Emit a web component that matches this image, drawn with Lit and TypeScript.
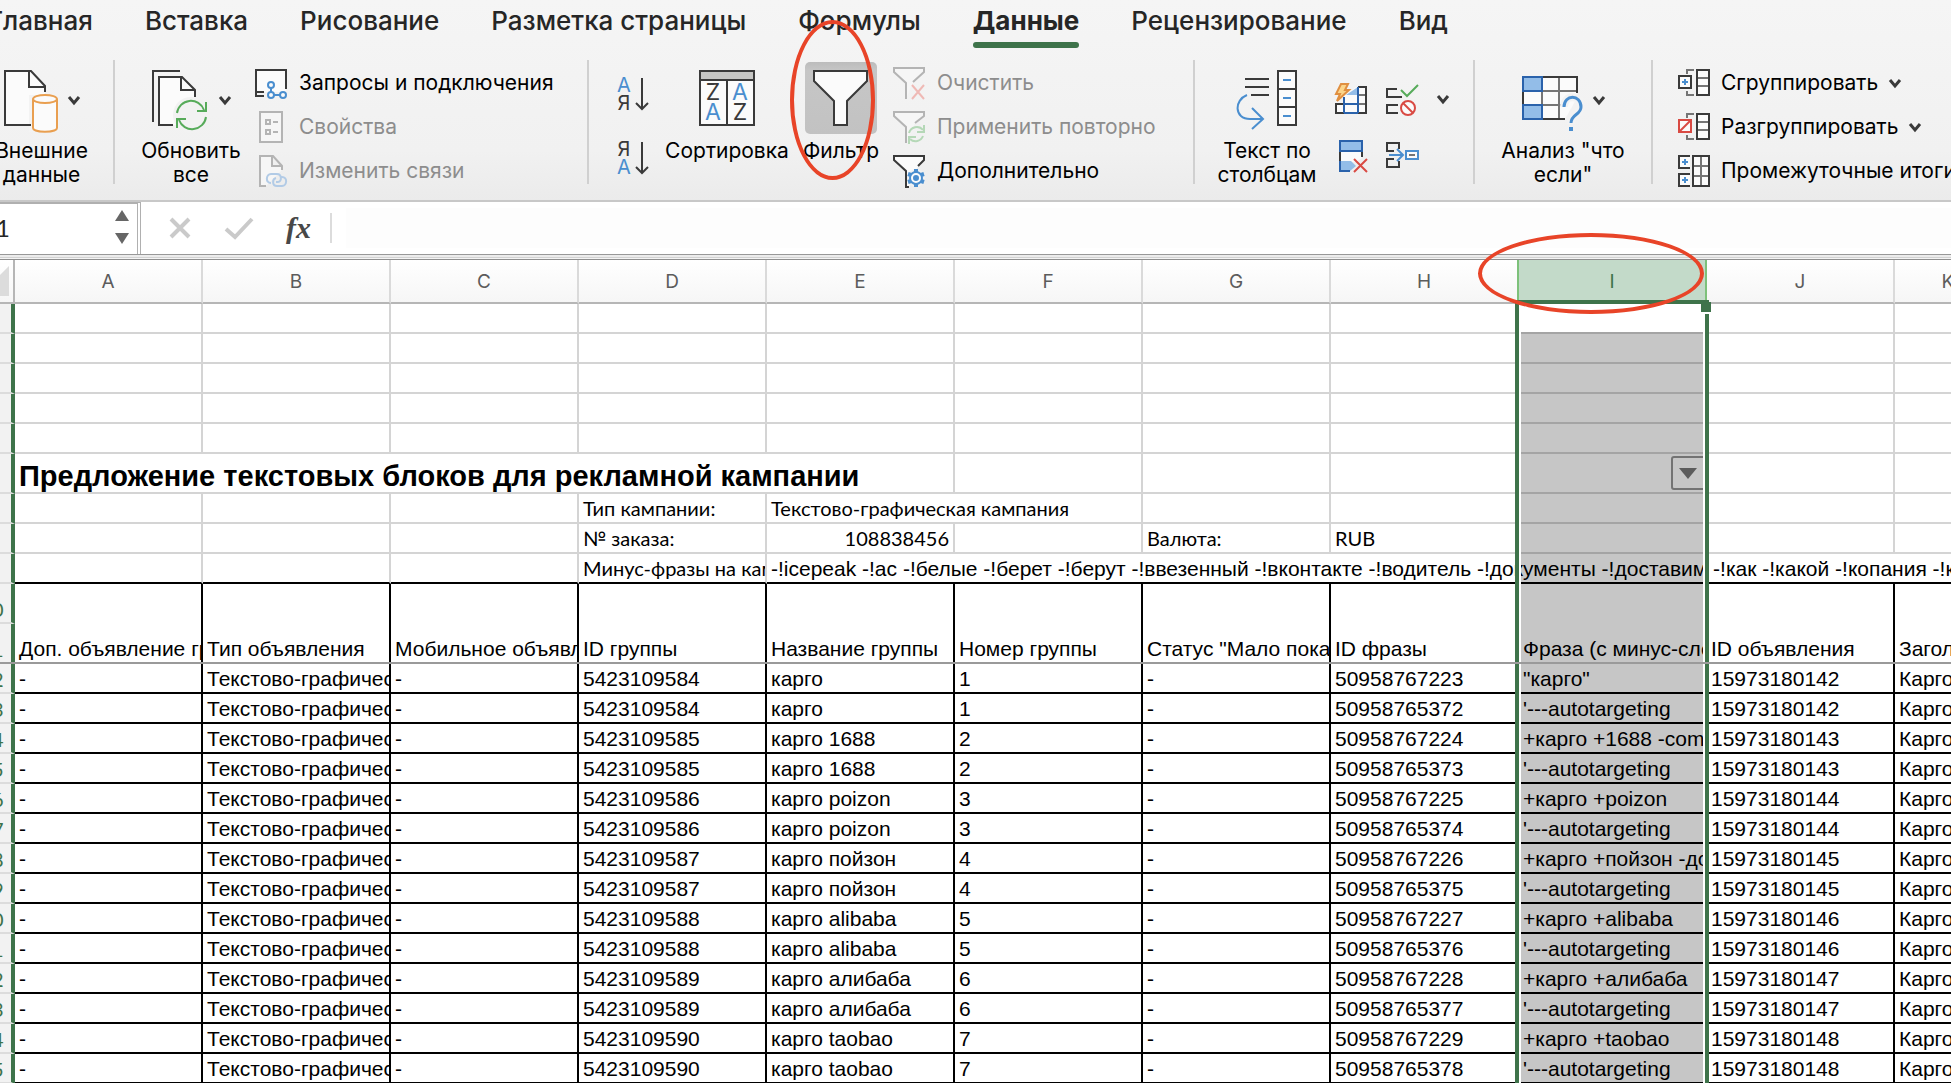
import { LitElement, html, svg, css, nothing } from "lit";
import type { TemplateResult } from "lit";
import { customElement } from "lit/decorators.js";
import { classMap } from "lit/directives/class-map.js";

const pic = (w: number, h: number, body: unknown) =>
  html`<svg class="pic" width=${w} height=${h} viewBox="0 0 ${w} ${h}" fill="none" stroke-width="2" aria-hidden="true">${body}</svg>`;

const INK = "#3a3a3a";
const BLUE = "#4a8ecf";
const NAVY = "#2a62ab";
const SKY = "#93bde8";
const RED = "#d94a43";
const GREEN = "#57ab5a";
const GREY = "#757575";
const PALE = "#b4b4b4";
const PAPER = "#fbfbfb";

const chevron = pic(14, 10, svg`<path d="M2 2L7 8L12 2" stroke=${INK} stroke-width="3"/>`);

const icons = {
  external: pic(56, 64, svg`
    <path d="M28 57H2V3H28L42 18V57Z" fill=${PAPER}/>
    <rect x="26" y="27" width="30" height="37" fill="#f3f3f3"/>
    <path d="M28 57H2V3H28L42 18V24M26 3V19H42" stroke=${INK}/>
    <path d="M30 31V60C30 65 54 65 54 60V31" fill=${PAPER} stroke="#e99f50"/>
    <ellipse cx="42" cy="31" rx="12" ry="4" fill=${PAPER} stroke="#e99f50"/>`),
  refresh: pic(60, 64, svg`
    <path d="M30 3H3V54" stroke=${INK}/>
    <path d="M23 57H9V9H31L45 23V57Z" fill=${PAPER}/>
    <circle cx="41" cy="47" r="18" fill="#f2f2f2"/>
    <path d="M23 57H9V9H32L45 22V29M31 9V22H45" stroke=${INK}/>
    <path d="M27 45A14 14 0 0 1 54 42M56 34V43H47M56 49A14 14 0 0 1 29 52M27 60V51H36" stroke=${GREEN}/>`),
  queries: pic(36, 36, svg`
    <rect x="3" y="5" width="30" height="22" fill=${PAPER}/>
    <path d="M11 31H3V5H33V24M3 27H11" stroke=${INK}/>
    <path d="M18 23V27M21 30H27" stroke=${BLUE}/>
    <g stroke=${BLUE} fill=${PAPER}><circle cx="18" cy="20" r="3"/><circle cx="18" cy="30" r="3"/><circle cx="30" cy="30" r="3"/></g>`),
  properties: pic(36, 36, svg`
    <g stroke=${PALE}><rect x="7" y="3" width="22" height="30" fill="#f6f6f6"/>
    <rect x="13" y="11" width="4" height="4"/><rect x="13" y="21" width="4" height="4"/><path d="M20 13H25M20 23H25"/></g>`),
  links: pic(36, 36, svg`
    <path d="M13 33H7V3H20L29 13V17M19 3V13H29" stroke=${PALE} fill="#f6f6f6"/>
    <path d="M18 30C12 30 13 21 18 21H24C29 21 29 29 25 29H23M27 24H29C35 24 34 33 29 33H24C19 33 19 26 23 25" stroke="#b2cbe6"/>`),
  sortUp: pic(36, 36, svg`
    <text x="9" y="16" class="glyph" fill=${BLUE}>А</text><text x="9" y="34" class="glyph" fill=${INK}>Я</text>
    <path d="M27 2V33M21 27L27 33L33 27" stroke=${INK}/>`),
  sortDown: pic(36, 36, svg`
    <text x="9" y="16" class="glyph" fill=${INK}>Я</text><text x="9" y="34" class="glyph" fill=${BLUE}>А</text>
    <path d="M27 2V33M21 27L27 33L33 27" stroke=${INK}/>`),
  sort: pic(58, 64, svg`
    <rect x="2" y="3" width="54" height="54" fill=${PAPER} stroke=${INK}/>
    <path d="M3 4H55V11H3Z" fill="#c6c6c4"/><path d="M2 12H56M29 12V57" stroke=${INK}/>
    <text x="15" y="32" class="big" fill=${INK}>Z</text><text x="42" y="32" class="big" fill=${BLUE}>A</text>
    <text x="15" y="52" class="big" fill=${BLUE}>A</text><text x="42" y="52" class="big" fill=${INK}>Z</text>`),
  filter: pic(72, 72, svg`
    <path d="M9 9H62V19L42 39V63H29V39L9 19Z" fill=${PAPER} stroke=${INK}/>`),
  clear: pic(36, 36, svg`
    <path d="M22 17L33 7V3H3V7L15 18V34" fill="#f6f6f6" stroke=${PALE}/>
    <path d="M21 20L33 34M33 20L21 34" stroke="#efb9b5"/>`),
  reapply: pic(36, 36, svg`
    <path d="M24 14L33 7V3H3V7L15 18V34" fill="#f6f6f6" stroke=${PALE}/>
    <path d="M18 24A8 8 0 0 1 32 21M33 16V23H26M32 27A8 8 0 0 1 19 30M18 35V28H25" stroke="#b5d8b7"/>`),
  advanced: pic(36, 36, svg`
    <path d="M27 13L33 7V3H3V7L15 18V34H18" fill=${PAPER} stroke=${INK}/>
    <circle cx="25" cy="25" r="9" fill="#f2f2f2"/>
    <circle cx="25" cy="25" r="6" fill=${PAPER} stroke=${BLUE} stroke-width="2"/>
    <circle cx="25" cy="25" r="2" fill=${BLUE} stroke=${BLUE}/>
    <path d="M25 16V19M25 31V34M17 21L20 22M30 28L33 29M33 21L30 22M20 28L17 29" stroke=${BLUE} stroke-width="4"/>`),
  columns: pic(64, 64, svg`
    <rect x="43" y="3" width="18" height="54" fill=${PAPER}/>
    <path d="M10 11H34M10 19H34M16 27H34M43 3H61V57H43ZM43 21H61M43 39H61" stroke=${INK}/>
    <path d="M48 12H56M48 30H56M48 48H56M12 27C-1 32 -1 51 15 51H27M17 40L28 51L17 61" stroke=${BLUE}/>`),
  flash: pic(34, 34, svg`
    <path d="M22 5H32V31H2V22H10V14Z" fill=${PAPER}/>
    <path d="M24 5V13H12Z" fill=${SKY}/>
    <path d="M25 13H32M25 22H32" stroke=${GREY}/>
    <path d="M24 5H32V31H2V22H9" stroke=${INK}/>
    <path d="M10 15V31M24 5V31M10 22H24M10 31H24" stroke=${NAVY}/>
    <path d="M7 2H14L11 8H15L3 19L6 12H2Z" fill="#fbd58a" stroke="#e08f40"/>`),
  validate: pic(36, 34, svg`
    <path d="M13 7H3V15H18M14 23H3V31H14" stroke=${INK}/>
    <path d="M17 8L23 14L34 3" stroke=${GREEN}/>
    <g stroke=${RED}><circle cx="24" cy="26" r="7" fill=${PAPER}/><path d="M19 21L29 31"/></g>`),
  dedupe: pic(34, 36, svg`
    <path d="M6 12H28V20L22 24H6Z" fill=${PAPER}/>
    <path d="M6 23H17L22 28L16 33H6Z" fill=${SKY}/>
    <path d="M28 13V19M6 13V23" stroke=${INK}/>
    <path d="M6 3H28V13H6Z" fill=${SKY} stroke=${NAVY}/><path d="M6 23V33H16" stroke=${NAVY}/>
    <path d="M20 21L33 34M33 21L20 34" stroke=${RED}/>`),
  merge: pic(36, 36, svg`
    <path d="M10 13H3V5H15V11M10 21H3V29H15V23" stroke=${INK}/>
    <path d="M5 17H18M13 11L19 17L13 23" stroke=${BLUE}/>
    <rect x="22" y="13" width="12" height="8" fill=${PAPER} stroke=${BLUE}/><path d="M25 17H31" stroke=${GREY}/>`),
  whatIf: pic(64, 64, svg`
    <path d="M3 9H57V30L45 51H3Z" fill=${PAPER}/>
    <path d="M22 9V51M39 9V51M3 23H57M3 37H44" stroke=${GREY}/>
    <path d="M45 51H3V9H57V25" stroke=${INK}/>
    <path d="M3 9H22V23H3ZM3 37H22V51H3Z" fill=${SKY} stroke=${NAVY}/>
    <path d="M44 39C44 26 61 26 61 39C61 47 51 46 51 56" stroke="#f3f3f3" stroke-width="8"/>
    <path d="M44 39C44 26 61 26 61 39C61 47 51 46 51 55" stroke=${BLUE} stroke-width="3"/>
    <rect x="49" y="59" width="4" height="4" fill=${BLUE}/>`),
  group: pic(34, 36, svg`
    <path d="M17 5H10V9M10 26V30H17" stroke=${GREY}/>
    <rect x="2" y="11" width="12" height="12" fill=${PAPER} stroke=${INK}/><path d="M5 17H11M8 14V20" stroke=${BLUE}/>
    <path d="M20 5H32V30H20Z" fill=${PAPER}/><path d="M20 13H32M20 21H32" stroke=${GREY}/><path d="M20 5H32V30H20Z" stroke=${INK}/>`),
  ungroup: pic(34, 36, svg`
    <path d="M17 5H10V9M10 26V30H17" stroke=${GREY}/>
    <rect x="2" y="11" width="12" height="12" fill=${PAPER} stroke=${RED}/><path d="M3 22L13 12" stroke=${RED}/>
    <path d="M20 5H32V30H20Z" fill=${PAPER}/><path d="M20 13H32M20 21H32" stroke=${GREY}/><path d="M20 5H32V30H20Z" stroke=${INK}/>`),
  subtotal: pic(34, 36, svg`
    <path d="M13 3H2V15H13M13 21H2V33H13" fill=${PAPER} stroke=${INK}/>
    <path d="M5 9H11M8 6V12M5 27H11M8 24V30" stroke=${BLUE}/>
    <path d="M16 3H32V33H16Z" fill=${PAPER}/><path d="M24 3V33M16 13H32M16 23H32" stroke=${GREY}/><path d="M16 3H32V33H16Z" stroke=${INK}/>`),
};

const TABS = ["Главная", "Вставка", "Рисование", "Разметка страницы", "Формулы", "Данные", "Рецензирование", "Вид"];
const COLUMNS = ["A", "B", "C", "D", "E", "F", "G", "H", "I", "J", "K"];
const HEADINGS = [
  "Доп. объявление группы", "Тип объявления", "Мобильное объявление", "ID группы", "Название группы",
  "Номер группы", "Статус \"Мало показов\"", "ID фразы", "Фраза (с минус-словами)", "ID объявления", "Заголовок",
];
const GROUPS: [string, string][] = [
  ["карго", "\"карго\""],
  ["карго 1688", "+карго +1688 -com"],
  ["карго poizon", "+карго +poizon"],
  ["карго пойзон", "+карго +пойзон -доставка"],
  ["карго alibaba", "+карго +alibaba"],
  ["карго алибаба", "+карго +алибаба"],
  ["карго taobao", "+карго +taobao"],
];
const ROWS: string[][] = GROUPS.flatMap(([name, phrase], i) => {
  const row = (phraseId: number, text: string) => [
    "-", "Текстово-графическое", "-", String(5423109584 + i), name, String(i + 1), "-",
    String(phraseId), text, String(15973180142 + i), "Карго",
  ];
  return [row(50958767223 + i, phrase), row(50958765372 + i, "'---autotargeting")];
});
const MINUS =
  "-!icepeak -!ас -!белые -!берет -!берут -!ввезенный -!вконтакте -!водитель -!документы -!доставим -!как -!какой -!копания -!ксерокс";

@customElement("app-root")
export class AppRoot extends LitElement {
  static styles = css`
    :host {
      display: flex;
      flex-direction: column;
      height: 100vh;
      overflow: hidden;
      position: relative;
      background: #fff;
      color: #000;
      font-family: Inter, "Liberation Sans", sans-serif;
      font-size: 21px;
      line-height: 24px;
      --accent: #3e734a;
    }
    * { box-sizing: border-box; }
    button, input {
      font: inherit;
      color: inherit;
      border: 0;
      margin: 0;
      padding: 0;
      background: none;
      white-space: nowrap;
    }
    svg { display: block; flex: none; overflow: visible; }

    .ribbon {
      flex: none;
      height: 202px;
      overflow: hidden;
      border-bottom: 2px solid #c8c8c8;
      background: linear-gradient(#f5f5f5, #f1f1f1 75%, #ebebeb);
    }
    .tabs { display: flex; gap: 52px; height: 60px; margin-left: -12px; }
    .tab {
      display: flex;
      flex: none;
      flex-direction: column;
      height: 48px;
      color: #262626;
      font-size: 26px;
      line-height: 42px;
      font-weight: 500;
    }
    .tab.active { font-weight: 700; }
    .tab.active::after { content: ""; height: 6px; border-radius: 3px; background: var(--accent); }

    .groups { display: flex; height: 124px; }
    .group {
      display: flex;
      flex: none;
      gap: 12px;
      padding-left: 26px;
      border-right: 2px solid #d0d0d0;
    }
    .g-data { width: 115px; padding: 0 30px 0 0; justify-content: center; }
    .g-links { width: 474px; }
    .g-sort { width: 606px; }
    .g-tools { width: 280px; padding-left: 22px; gap: 17px; }
    .g-what { width: 178px; padding: 0; justify-content: center; }
    .g-outline { flex: 1; padding-left: 24px; border: 0; }

    .large {
      display: flex;
      flex-direction: column;
      align-items: center;
      gap: 7px;
      padding-top: 8px;
      text-align: center;
      flex: none;
      align-self: flex-start;
    }
    .large .art { display: flex; align-items: center; gap: 8px; height: 64px; }
    .large.w100 { width: 100px; }
    .large.w128 { width: 128px; }
    .large.w76 { width: 76px; }
    .large.on .pic { margin-top: -4px; border-radius: 5px; background: linear-gradient(#bcbcbc, #c6c6c6 12%, #c2c2c2); }
    .list { display: flex; flex-direction: column; align-items: flex-start; padding-top: 1px; }
    .small { display: flex; flex: none; align-items: center; gap: 10px; height: 44px; }
    .small:disabled { color: #8d8d8d; }
    .pair { display: flex; flex-direction: column; gap: 28px; padding-top: 16px; }
    .tools { display: grid; grid-template-columns: 34px 36px 14px; column-gap: 16px; row-gap: 22px; padding-top: 22px; align-content: start; align-items: center; }
    .glyph { font: 20px Inter, sans-serif; text-anchor: middle; }
    .big { font: 23px Inter, sans-serif; text-anchor: middle; }

    .formula { display: flex; flex: none; height: 52px; align-items: center; }
    .name {
      display: flex;
      align-items: center;
      justify-content: space-between;
      width: 141px;
      height: 52px;
      padding: 0 8px 4px 0;
      border-top: 2px solid #b0b0b0;
      border-right: 4px double #b0b0b0;
    }
    .name input { width: 80px; margin-left: -4px; font-family: Lato, sans-serif; font-size: 24px; color: #262626; }
    .steps { display: flex; flex-direction: column; gap: 12px; }
    .marks { display: flex; align-items: center; gap: 32px; padding-left: 27px; width: 191px; height: 30px; border-right: 2px solid #dcdcdc; }
    .fx { font: italic bold 30px/30px "Liberation Serif", serif; color: #484848; }
    .entry { flex: 1; height: 40px; margin-left: 14px; background: #fdfdfd; }
    .split {
      flex: none;
      height: 6px;
      background: linear-gradient(#989898 1px, #ececec 1px 3px, #d2d2d2 3px 4px, #f4f4f4 4px 5px, #8f8f8f 5px);
    }

    .sheet { position: relative; flex: 1; min-height: 0; overflow: hidden; background: #fff; }
    table { table-layout: fixed; width: 2030px; margin-left: -27px; border-collapse: separate; border-spacing: 0; }
    .c-num { width: 42px; }
    .c-col { width: 188px; }
    .c-last { width: 108px; }
    th, td {
      height: 30px;
      padding: 0 4px;
      overflow: hidden;
      white-space: nowrap;
      text-align: left;
      vertical-align: bottom;
      font-weight: 400;
      font-family: "Liberation Sans", Arial, sans-serif;
      font-size: 21px;
      line-height: 26px;
      border-right: 2px solid #d4d4d4;
      border-bottom: 2px solid #d4d4d4;
    }
    thead th {
      height: 44px;
      padding: 2px 4px 0;
      vertical-align: middle;
      text-align: center;
      font-family: Inter, sans-serif;
      font-size: 19px;
      color: #5c5c5c;
      background: linear-gradient(#fff, #f6f6f6);
      border-right: 2px solid #dadada;
      border-bottom: 2px solid #b6b6b6;
    }
    thead .corner { padding: 0; border-right-color: #b6b6b6; }
    .corner svg { margin-left: 6px; }
    thead .before { border-right-color: #7dc17a; }
    thead .picked { color: var(--accent); background: #c3dac9; border-right-color: #7dc17a; }
    tbody .num {
      text-align: center;
      padding: 0;
      font-family: Lato, sans-serif;
      font-size: 20px;
      color: var(--accent);
      background: #f2f2f2;
      border-right: 4px solid var(--accent);
      border-bottom-color: #dcdcdc;
    }
    .title td { height: 40px; line-height: 32px; font-size: 29px; font-weight: 700; }
    .meta td { font-family: Lato, sans-serif; font-size: 20px; line-height: 28px; }
    .meta .arial { font-family: "Liberation Sans", Arial, sans-serif; font-size: 21px; line-height: 26px; }
    .right { text-align: right; }
    .last td { border-bottom-color: #000; }
    .tall td, .tall th { height: 40px; }
    .boxed td { border-right-color: #000; border-bottom-color: #000; }
    .boxed.open td { border-bottom: 0; }
    .boxed.frozen td { border-bottom-color: #9a9a9a; }
    td.host { position: relative; }
    .drop {
      position: absolute;
      top: 2px;
      right: -2px;
      width: 36px;
      height: 34px;
      display: flex;
      align-items: center;
      padding-left: 6px;
      border: 2px solid #949494;
      border-radius: 3px;
    }

    .selection {
      position: absolute;
      top: 40px;
      bottom: 0;
      left: 1515px;
      width: 194px;
      pointer-events: none;
      border: 4px solid var(--accent);
      border-bottom: 0;
      box-shadow: inset 2px 0 #fff, inset -2px 0 #fff;
    }
    .shade { position: absolute; inset: 28px 2px 0; background: rgba(0, 0, 0, 0.225); }
    .handle { position: absolute; top: -2px; right: -6px; width: 10px; height: 10px; background: var(--accent); box-shadow: 0 2px #fff; }
    .freeze { position: absolute; top: 402px; left: 0; right: 0; height: 2px; background: #9a9a9a; }
    .ring { position: absolute; border: 4px solid #e84428; border-radius: 50%; pointer-events: none; }
    .ring-filter { left: 790px; top: 20px; width: 85px; height: 160px; }
    .ring-column { left: 1478px; top: 233px; width: 226px; height: 81px; }
  `;

  private large(art: unknown, lines: string[], cls = "", menu = false) {
    return html`<button class="large ${cls}">
      <span class="art">${art}${menu ? chevron : nothing}</span>
      <span>${lines.map((line, i) => html`${i ? html`<br />` : nothing}${line}`)}</span>
    </button>`;
  }

  private small(art: unknown, label: string, off = false, menu = false) {
    return html`<button class="small" ?disabled=${off}>${art}<span>${label}</span>${menu ? chevron : nothing}</button>`;
  }

  private empty(from: number, to: number): TemplateResult[] {
    return COLUMNS.slice(from, to).map(() => html`<td></td>`);
  }

  private ribbon() {
    return html`<header class="ribbon">
      <nav class="tabs">
        ${TABS.map((t) => html`<button class=${classMap({ tab: true, active: t === "Данные" })}>${t}</button>`)}
      </nav>
      <div class="groups">
        <div class="group g-data">${this.large(icons.external, ["Внешние", "данные"], "", true)}</div>
        <div class="group g-links">
          ${this.large(icons.refresh, ["Обновить", "все"], "w100", true)}
          <div class="list">
            ${this.small(icons.queries, "Запросы и подключения")}
            ${this.small(icons.properties, "Свойства", true)}
            ${this.small(icons.links, "Изменить связи", true)}
          </div>
        </div>
        <div class="group g-sort">
          <div class="pair">
            <button aria-label="Сортировка по возрастанию">${icons.sortUp}</button>
            <button aria-label="Сортировка по убыванию">${icons.sortDown}</button>
          </div>
          ${this.large(icons.sort, ["Сортировка"], "w128")}
          ${this.large(icons.filter, ["Фильтр"], "w76 on")}
          <div class="list">
            ${this.small(icons.clear, "Очистить", true)}
            ${this.small(icons.reapply, "Применить повторно", true)}
            ${this.small(icons.advanced, "Дополнительно")}
          </div>
        </div>
        <div class="group g-tools">
          ${this.large(icons.columns, ["Текст по", "столбцам"], "w100")}
          <div class="tools">
            <button aria-label="Мгновенное заполнение">${icons.flash}</button>
            <button aria-label="Проверка данных">${icons.validate}</button>
            <button aria-label="Меню проверки данных">${chevron}</button>
            <button aria-label="Удалить дубликаты">${icons.dedupe}</button>
            <button aria-label="Консолидация">${icons.merge}</button>
          </div>
        </div>
        <div class="group g-what">${this.large(icons.whatIf, ["Анализ \"что", "если\""], "", true)}</div>
        <div class="group g-outline">
          <div class="list">
            ${this.small(icons.group, "Сгруппировать", false, true)}
            ${this.small(icons.ungroup, "Разгруппировать", false, true)}
            ${this.small(icons.subtotal, "Промежуточные итоги")}
          </div>
        </div>
      </div>
    </header>`;
  }

  private formulaBar() {
    return html`<div class="formula">
        <div class="name">
          <input aria-label="Имя ячейки" .value=${"1"} />
          <div class="steps">
            <button aria-label="Вверх"><svg width="14" height="11"><path d="M7 0L14 11H0Z" fill="#666" /></svg></button>
            <button aria-label="Вниз"><svg width="14" height="11"><path d="M0 0H14L7 11Z" fill="#666" /></svg></button>
          </div>
        </div>
        <div class="marks">
          <button aria-label="Отмена">${pic(24, 24, svg`<path d="M3 3L21 21M21 3L3 21" stroke="#cacaca" stroke-width="4"/>`)}</button>
          <button aria-label="Ввод">${pic(30, 24, svg`<path d="M2 13L11 21L28 3" stroke="#cacaca" stroke-width="4"/>`)}</button>
          <button class="fx" aria-label="Вставить функцию">fx</button>
        </div>
        <input class="entry" aria-label="Строка формул" />
      </div>
      <div class="split"></div>`;
  }

  private num(n?: number) {
    return html`<th class="num" scope="row">${n ?? nothing}</th>`;
  }

  private grid() {
    return html`<table>
      <colgroup>
        <col class="c-num" />
        ${COLUMNS.map((c) => html`<col class=${c === "K" ? "c-last" : "c-col"} />`)}
      </colgroup>
      <thead>
        <tr>
          <th class="corner">
            <svg width="30" height="30"><path d="M30 0V30H0Z" fill="#dcdcdc" /></svg>
          </th>
          ${COLUMNS.map((c) => html`<th scope="col" class=${classMap({ before: c === "H", picked: c === "I" })}>${c}</th>`)}
        </tr>
      </thead>
      <tbody>
        ${[1, 2, 3, 4, 5].map(() => html`<tr>${this.num()}${this.empty(0, 11)}</tr>`)}
        <tr class="title">
          ${this.num()}
          <td colspan="5">Предложение текстовых блоков для рекламной кампании</td>
          ${this.empty(5, 8)}
          <td class="host">
            <button class="drop" aria-label="Фильтр столбца">
              <svg width="18" height="11"><path d="M0 0H18L9 11Z" fill="#777" /></svg>
            </button>
          </td>
          ${this.empty(9, 11)}
        </tr>
        <tr class="meta">
          ${this.num()}${this.empty(0, 3)}
          <td>Тип кампании:</td>
          <td colspan="2">Текстово-графическая кампания</td>
          ${this.empty(6, 11)}
        </tr>
        <tr class="meta">
          ${this.num()}${this.empty(0, 3)}
          <td>№ заказа:</td>
          <td class="right">108838456</td>
          <td></td>
          <td>Валюта:</td>
          <td>RUB</td>
          ${this.empty(8, 11)}
        </tr>
        <tr class="meta last">
          ${this.num()}${this.empty(0, 3)}
          <td>Минус-фразы на кампанию:</td>
          <td class="arial" colspan="7">${MINUS}</td>
        </tr>
        <tr class="boxed open tall">${this.num(10)}${this.empty(0, 11)}</tr>
        <tr class="boxed frozen tall">${this.num(11)}${HEADINGS.map((h) => html`<td>${h}</td>`)}</tr>
        ${ROWS.map((r, i) => html`<tr class="boxed">${this.num(12 + i)}${r.map((v) => html`<td>${v}</td>`)}</tr>`)}
      </tbody>
    </table>`;
  }

  render() {
    return html`
      ${this.ribbon()} ${this.formulaBar()}
      <main class="sheet">
        ${this.grid()}
        <div class="selection"><div class="shade"></div><div class="handle"></div></div>
        <div class="freeze"></div>
      </main>
      <div class="ring ring-filter"></div>
      <div class="ring ring-column"></div>
    `;
  }
}
